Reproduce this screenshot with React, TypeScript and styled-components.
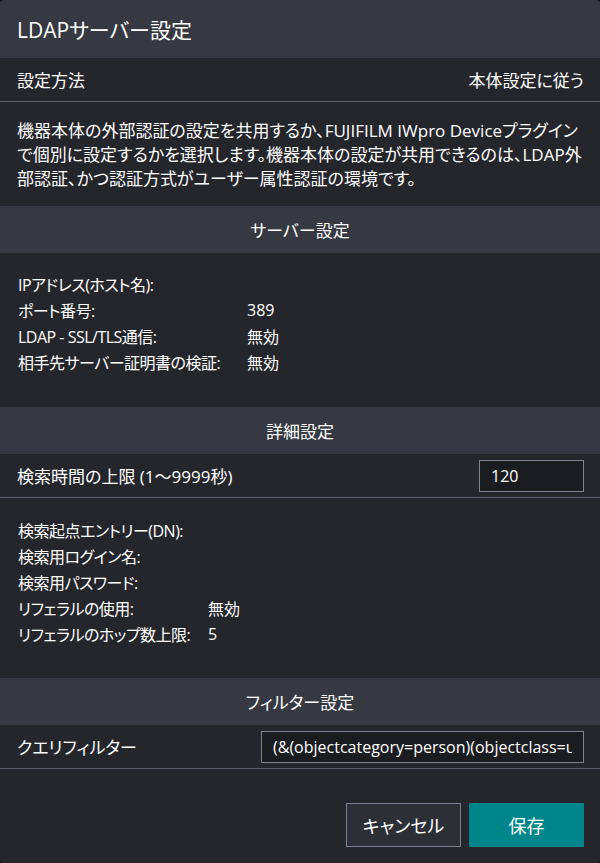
import React from "react";
import styled, { createGlobalStyle } from "styled-components";

const Global = createGlobalStyle`
  html, body { margin: 0; padding: 0; background: #121316; }
  body {
    font-family: "Segoe UI", "Open Sans", "Noto Sans CJK JP", sans-serif;
    font-feature-settings: "palt" 1;
    color: #ffffff;
  }
  * { box-sizing: border-box; }
`;

const Dialog = styled.div`
  width: 600px;
  height: 863px;
  background: #25262b;
  border-radius: 4px;
  overflow: hidden;
  display: flex;
  flex-direction: column;
`;

const Header = styled.header`
  height: 58px;
  background: #363941;
  display: flex;
  align-items: center;
  padding: 0 17px;
`;

const Title = styled.h1`
  margin: 0;
  font-size: 21px;
  font-weight: 400;
  color: #ffffff;
`;

const FormRow = styled.div`
  height: 44px;
  display: flex;
  align-items: center;
  justify-content: space-between;
  padding: 0 16px 0 17px;
  border-bottom: 1px solid #5b606c;
  font-size: 17px;
`;

const RowLabel = styled.span`
  color: #ffffff;
`;

const RowValue = styled.span`
  color: #ffffff;
`;

const TextInput = styled.input<{ $width: number }>`
  width: ${(p) => p.$width}px;
  height: 32px;
  background: #1b1c20;
  border: 1px solid #7c8393;
  border-radius: 0;
  color: #ffffff;
  font-family: inherit;
  font-feature-settings: "palt" 1;
  font-size: 16px;
  padding: 0 11px;
  outline: none;
`;

const Description = styled.p`
  margin: 0;
  padding: 17px 17px 15px;
  font-size: 17px;
  line-height: 24px;
  white-space: nowrap;
`;

const SectionHeader = styled.h2`
  margin: 0;
  height: 47px;
  background: #363941;
  display: flex;
  align-items: center;
  justify-content: center;
  font-size: 17px;
  font-weight: 400;
  color: #ffffff;
`;

const InfoGrid = styled.dl<{ $labelWidth: number; $pt: number; $pb: number }>`
  margin: 0;
  padding: ${(p) => p.$pt}px 17px ${(p) => p.$pb}px 18px;
  display: grid;
  grid-template-columns: ${(p) => p.$labelWidth}px 1fr;
  grid-auto-rows: 26px;
  align-items: center;
  font-size: 16px;
`;

const InfoLabel = styled.dt`
  margin: 0;
  white-space: nowrap;
  letter-spacing: -0.5px;
`;

const InfoValue = styled.dd`
  margin: 0;
`;

const Footer = styled.footer`
  margin-top: auto;
  display: flex;
  justify-content: flex-end;
  gap: 8px;
  padding: 0 16px 16px;
`;

const Button = styled.button<{ $primary?: boolean }>`
  width: 115px;
  height: 44px;
  font-family: inherit;
  font-feature-settings: "palt" 1;
  font-size: 18px;
  color: #ffffff;
  cursor: pointer;
  border-radius: 0;
  background: ${(p) => (p.$primary ? "#00868a" : "#2c2f36")};
  border: 1px solid ${(p) => (p.$primary ? "#00868a" : "#7c8393")};
`;

type Info = [string, string];

const serverInfo: Info[] = [
  ["IPアドレス(ホスト名):", ""],
  ["ポート番号:", "389"],
  ["LDAP - SSL/TLS通信:", "無効"],
  ["相手先サーバー証明書の検証:", "無効"],
];

const detailInfo: Info[] = [
  ["検索起点エントリー(DN):", ""],
  ["検索用ログイン名:", ""],
  ["検索用パスワード:", ""],
  ["リフェラルの使用:", "無効"],
  ["リフェラルのホップ数上限:", "5"],
];

function renderInfo(rows: Info[]) {
  return rows.map(([k, v]) => (
    <React.Fragment key={k}>
      <InfoLabel>{k}</InfoLabel>
      <InfoValue>{v}</InfoValue>
    </React.Fragment>
  ));
}

export default function App() {
  return (
    <>
      <Global />
      <Dialog>
        <Header>
          <Title>LDAPサーバー設定</Title>
        </Header>
        <FormRow>
          <RowLabel>設定方法</RowLabel>
          <RowValue>本体設定に従う</RowValue>
        </FormRow>
        <Description>
          機器本体の外部認証の設定を共用するか、FUJIFILM IWpro Deviceプラグイン
          <br />
          で個別に設定するかを選択します。機器本体の設定が共用できるのは、LDAP外
          <br />
          部認証、かつ認証方式がユーザー属性認証の環境です。
        </Description>
        <SectionHeader>サーバー設定</SectionHeader>
        <InfoGrid $labelWidth={229} $pt={18} $pb={32}>
          {renderInfo(serverInfo)}
        </InfoGrid>
        <SectionHeader>詳細設定</SectionHeader>
        <FormRow>
          <RowLabel>検索時間の上限 (1〜9999秒)</RowLabel>
          <TextInput $width={105} readOnly value="120" />
        </FormRow>
        <InfoGrid $labelWidth={190} $pt={19} $pb={31}>
          {renderInfo(detailInfo)}
        </InfoGrid>
        <SectionHeader>フィルター設定</SectionHeader>
        <FormRow>
          <RowLabel>クエリフィルター</RowLabel>
          <TextInput
            $width={323}
            readOnly
            value="(&(objectcategory=person)(objectclass=user))"
          />
        </FormRow>
        <Footer>
          <Button>キャンセル</Button>
          <Button $primary>保存</Button>
        </Footer>
      </Dialog>
    </>
  );
}
